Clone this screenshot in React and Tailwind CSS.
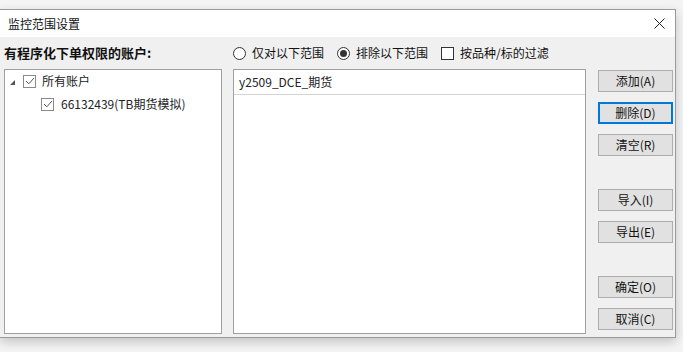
import React from 'react';

const font = { fontFamily: '"Noto Sans CJK SC", "Microsoft YaHei", sans-serif' };

function Check({ className = '' }) {
  return (
    <span className={`w-[13px] h-[13px] border border-[#8a8a8a] bg-white flex items-center justify-center ${className}`}>
      <svg width="10" height="8" viewBox="0 0 10 8">
        <path d="M1 4 L3.8 6.8 L9 1" fill="none" stroke="#555" strokeWidth="1" />
      </svg>
    </span>
  );
}

function Radio({ on }) {
  return (
    <span className="w-[13px] h-[13px] rounded-full border border-[#333] bg-white flex items-center justify-center">
      {on && <span className="w-[7px] h-[7px] rounded-full bg-[#333]" />}
    </span>
  );
}

function Btn({ children, active }) {
  return (
    <button
      className={`w-[75px] h-[22px] bg-[#e1e1e1] text-[12px] text-[#111] flex items-center justify-center leading-none ${
        active ? 'border-2 border-[#0078d7]' : 'border border-[#adadad]'
      }`}
    >
      {children}
    </button>
  );
}

export default function App() {
  return (
    <div className="w-[683px] h-[352px] bg-[#f4f4f4] pt-[9px] overflow-hidden" style={font}>
      <div className="w-[676px] h-[329px] border border-[#9a9a9a] border-l-0 bg-[#f0f0f0] flex flex-col shadow-[0_4px_10px_rgba(0,0,0,0.2)]">
        <div className="h-[27px] bg-white flex items-center justify-between pl-[8px] pr-[10px]">
          <span className="text-[12px] text-[#111]">监控范围设置</span>
          <svg width="11" height="11" viewBox="0 0 11 11">
            <path d="M0.5 0.5 L10.5 10.5 M10.5 0.5 L0.5 10.5" stroke="#222" strokeWidth="1" />
          </svg>
        </div>
        <div className="h-[32px] flex items-center pl-[4px]">
          <span className="w-[229px] text-[13px] font-bold text-[#111]">有程序化下单权限的账户:</span>
          <div className="flex items-center gap-[6px] text-[12px] text-[#111]">
            <Radio />
            <span>仅对以下范围</span>
          </div>
          <div className="flex items-center gap-[6px] text-[12px] text-[#111] ml-[13px]">
            <Radio on />
            <span>排除以下范围</span>
          </div>
          <div className="flex items-center gap-[6px] text-[12px] text-[#111] ml-[13px]">
            <span className="w-[13px] h-[13px] border border-[#333] bg-white" />
            <span>按品种/标的过滤</span>
          </div>
        </div>
        <div className="flex pl-[4px] h-[265px]">
          <div className="w-[218px] h-[265px] border border-[#a0a0a0] bg-white">
            <div className="h-[22px] flex items-center text-[12px] text-[#222]">
              <svg width="5" height="5" viewBox="0 0 5 5" className="ml-[5px] mt-[2px]">
                <path d="M5 0 L5 5 L0 5 Z" fill="#555" />
              </svg>
              <Check className="ml-[8px]" />
              <span className="ml-[6px]">所有账户</span>
            </div>
            <div className="h-[22px] flex items-center text-[12px] text-[#222] mt-[1px]">
              <Check className="ml-[36px]" />
              <span className="ml-[7px]">66132439(TB期货模拟)</span>
            </div>
          </div>
          <div className="ml-[11px] w-[353px] h-[265px] border border-[#a0a0a0] bg-white">
            <div className="h-[25px] border-b border-[#d4d4d4] flex items-center pl-[5px] text-[12px] text-[#222]">
              y2509_DCE_期货
            </div>
          </div>
          <div className="ml-[12px] flex flex-col pt-[1px]">
            <div className="flex flex-col gap-[10px]">
              <Btn>添加(A)</Btn>
              <Btn active>删除(D)</Btn>
              <Btn>清空(R)</Btn>
            </div>
            <div className="flex flex-col gap-[10px] mt-[33px]">
              <Btn>导入(I)</Btn>
              <Btn>导出(E)</Btn>
            </div>
            <div className="flex flex-col gap-[10px] mt-[33px]">
              <Btn>确定(O)</Btn>
              <Btn>取消(C)</Btn>
            </div>
          </div>
        </div>
      </div>
    </div>
  );
}
